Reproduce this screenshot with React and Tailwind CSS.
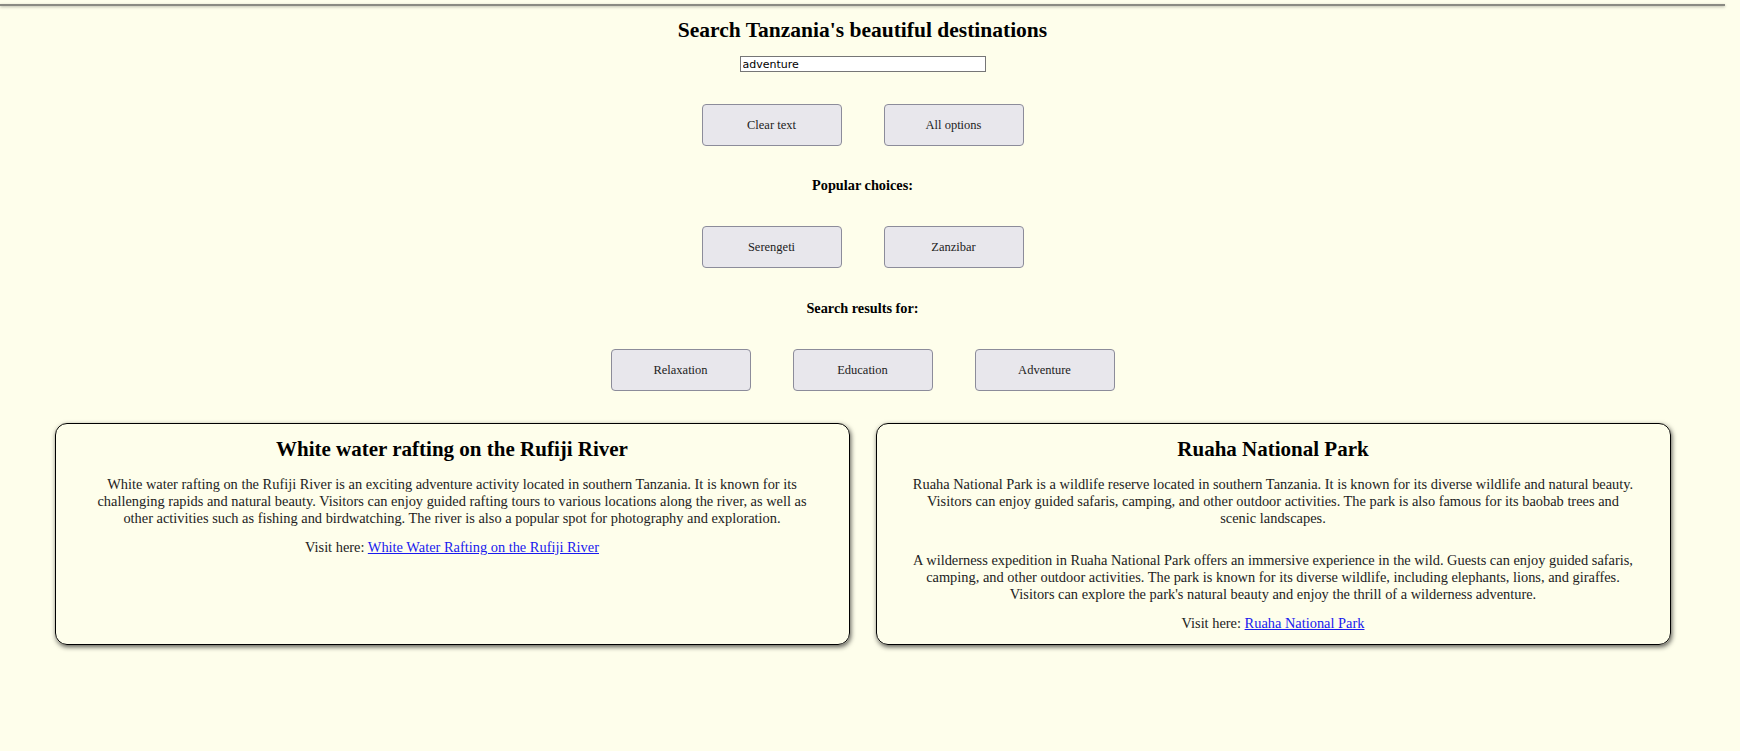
import React, { useState } from "react";

const serif = "font-['Liberation_Serif',serif]";

function Choice({ label }) {
  return (
    <button className="w-[140px] h-[42px] mx-[21px] bg-[#e8e7ec] border border-[#8c8c9a] rounded-[4px] text-[12.5px] text-[#222]">
      {label}
    </button>
  );
}

const results = [
  {
    title: "White water rafting on the Rufiji River",
    texts: [
      "White water rafting on the Rufiji River is an exciting adventure activity located in southern Tanzania. It is known for its challenging rapids and natural beauty. Visitors can enjoy guided rafting tours to various locations along the river, as well as other activities such as fishing and birdwatching. The river is also a popular spot for photography and exploration.",
    ],
    link: "White Water Rafting on the Rufiji River",
  },
  {
    title: "Ruaha National Park",
    texts: [
      "Ruaha National Park is a wildlife reserve located in southern Tanzania. It is known for its diverse wildlife and natural beauty. Visitors can enjoy guided safaris, camping, and other outdoor activities. The park is also famous for its baobab trees and scenic\u00a0landscapes.",
      "A wilderness expedition in Ruaha National Park offers an immersive experience in the wild. Guests can enjoy guided safaris, camping, and other outdoor activities. The park is known for its diverse wildlife, including elephants, lions, and giraffes. Visitors can explore the park's natural beauty and enjoy the thrill of a wilderness adventure.",
    ],
    link: "Ruaha National Park",
  },
];

function ResultCard({ item }) {
  return (
    <div className="w-[795px] border-[1.5px] border-black rounded-[12px] shadow-[1px_2px_5px_rgba(0,0,0,0.65)] px-[30px] pt-[12px] pb-[12px] text-center">
      <h2 className="text-[21px] font-bold leading-[27px] text-black">{item.title}</h2>
      {item.texts.map((t, i) => (
        <p key={i} className={`text-[14.4px] leading-[17px] text-[#222] ${i === 0 ? "mt-[13px]" : "mt-[25px]"}`}>
          {t}
        </p>
      ))}
      <p className="mt-[12px] text-[14.4px] leading-[17px] text-[#222]">
        Visit here:{" "}
        <a href="#" className="text-[#1a1aee] underline">
          {item.link}
        </a>
      </p>
    </div>
  );
}

export default function App() {
  const [query, setQuery] = useState("adventure");

  return (
    <div className={`min-h-screen w-full bg-[#fefeeb] ${serif}`}>
      <div className="w-[1725px] pt-[4px]">
        <div className="border-t-[2px] border-[#8a8a82] shadow-[0_1px_3px_rgba(0,0,0,0.3)]" />
        <h1 className="mt-[11px] text-center text-[21.5px] font-bold leading-[27px] text-black">
          Search Tanzania's beautiful destinations
        </h1>
        <div className="mt-[12px] flex justify-center">
          <input
            value={query}
            onChange={(e) => setQuery(e.target.value)}
            className="w-[246px] h-[16px] bg-white border border-[#767676] px-[2px] text-[11px] leading-[14px] font-['DejaVu_Sans',sans-serif] text-black outline-none"
          />
        </div>
        <div className="mt-[32px] flex justify-center">
          <Choice label="Clear text" />
          <Choice label="All options" />
        </div>
        <p className="mt-[31px] text-center text-[14.3px] font-bold leading-[17px] text-black">Popular choices:</p>
        <div className="mt-[32px] flex justify-center">
          <Choice label="Serengeti" />
          <Choice label="Zanzibar" />
        </div>
        <p className="mt-[32px] text-center text-[14.3px] font-bold leading-[17px] text-black">Search results for:</p>
        <div className="mt-[32px] flex justify-center">
          <Choice label="Relaxation" />
          <Choice label="Education" />
          <Choice label="Adventure" />
        </div>
        <div className="mt-[32px] flex justify-center gap-[26px] items-stretch">
          {results.map((r) => (
            <ResultCard key={r.title} item={r} />
          ))}
        </div>
      </div>
    </div>
  );
}
